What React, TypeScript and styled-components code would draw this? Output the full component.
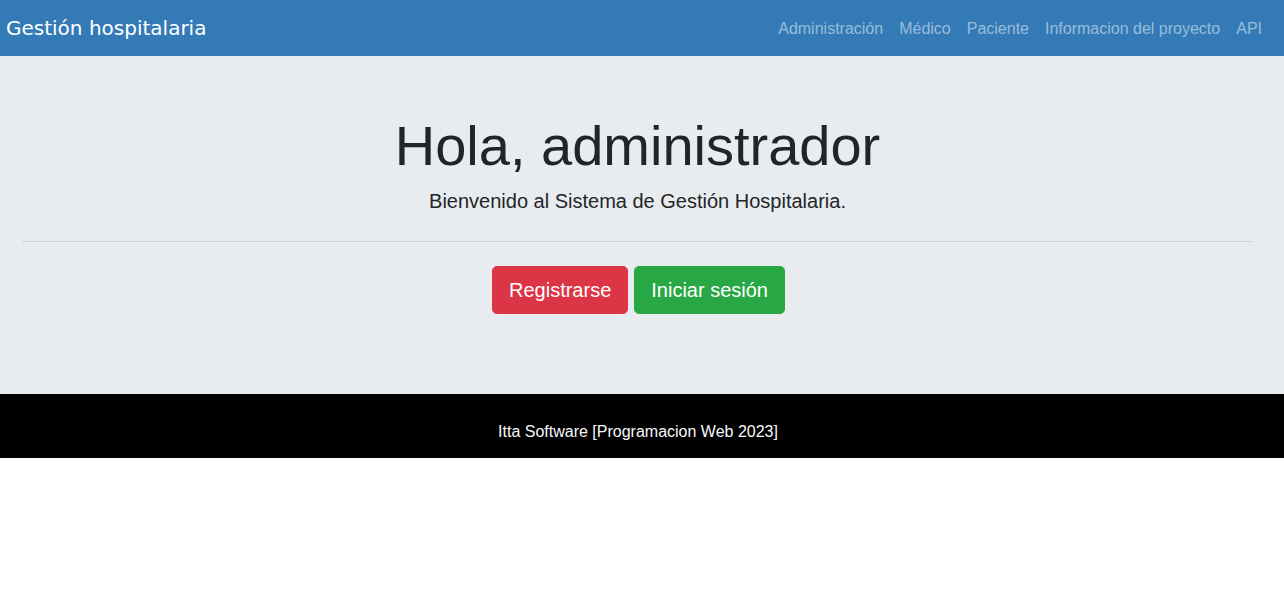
import React from "react";
import styled, { createGlobalStyle } from "styled-components";

const GlobalStyle = createGlobalStyle`
  * { box-sizing: border-box; }
  body {
    margin: 0;
    background: #fff;
    font-family: "Liberation Sans", Arial, sans-serif;
    font-size: 16px;
    line-height: 1.5;
    color: #212529;
  }
`;

const Navbar = styled.nav`
  height: 56px;
  background-color: #337ab7;
  display: flex;
  align-items: center;
  justify-content: space-between;
  padding: 0 14px 0 6px;
`;

const Brand = styled.a`
  font-family: "DejaVu Sans", sans-serif;
  font-size: 20px;
  line-height: 30px;
  color: #fff;
  text-decoration: none;
`;

const NavList = styled.ul`
  display: flex;
  list-style: none;
  margin: 0;
  padding: 0;
`;

const NavLink = styled.a`
  display: block;
  padding: 9px 8px 7px;
  color: rgba(255, 255, 255, 0.5);
  text-decoration: none;
  font-size: 16px;
  line-height: 24px;
`;

const Jumbotron = styled.section`
  background-color: #e9ecef;
  padding: 56px 31px 64px 22px;
  text-align: center;
`;

const Title = styled.h1`
  margin: 0 0 7px;
  font-size: 56px;
  font-weight: 300;
  line-height: 1.2;
`;

const Lead = styled.p`
  margin: 0 0 25px;
  font-size: 20px;
  font-weight: 300;
  line-height: 1.5;
`;

const Divider = styled.hr`
  margin: 0 0 24px;
  border: 0;
  border-top: 1px solid rgba(0, 0, 0, 0.1);
`;

const Actions = styled.div`
  display: flex;
  justify-content: center;
  gap: 6px;
  margin: 0 0 16px 2px;
`;

const Button = styled.a<{ $variant: "danger" | "success" }>`
  display: inline-block;
  padding: 8px 16px;
  font-size: 20px;
  line-height: 30px;
  border-radius: 4.8px;
  color: #fff;
  text-decoration: none;
  border: 1px solid ${(p) => (p.$variant === "danger" ? "#dc3545" : "#28a745")};
  background-color: ${(p) => (p.$variant === "danger" ? "#dc3545" : "#28a745")};
`;

const Footer = styled.footer`
  background-color: #000;
  color: #f8f9fa;
  height: 64px;
  display: flex;
  align-items: center;
  justify-content: center;
  padding: 12px 8px 0 0;
  font-size: 16px;
`;

const links = ["Administración", "Médico", "Paciente", "Informacion del proyecto", "API"];

export default function App() {
  return (
    <>
      <GlobalStyle />
      <Navbar>
        <Brand href="#">Gestión hospitalaria</Brand>
        <NavList>
          {links.map((l) => (
            <li key={l}>
              <NavLink href="#">{l}</NavLink>
            </li>
          ))}
        </NavList>
      </Navbar>
      <Jumbotron>
        <Title>Hola, administrador</Title>
        <Lead>Bienvenido al Sistema de Gestión Hospitalaria.</Lead>
        <Divider />
        <Actions>
          <Button $variant="danger" href="#">Registrarse</Button>
          <Button $variant="success" href="#">Iniciar sesión</Button>
        </Actions>
      </Jumbotron>
      <Footer>Itta Software [Programacion Web 2023]</Footer>
    </>
  );
}
